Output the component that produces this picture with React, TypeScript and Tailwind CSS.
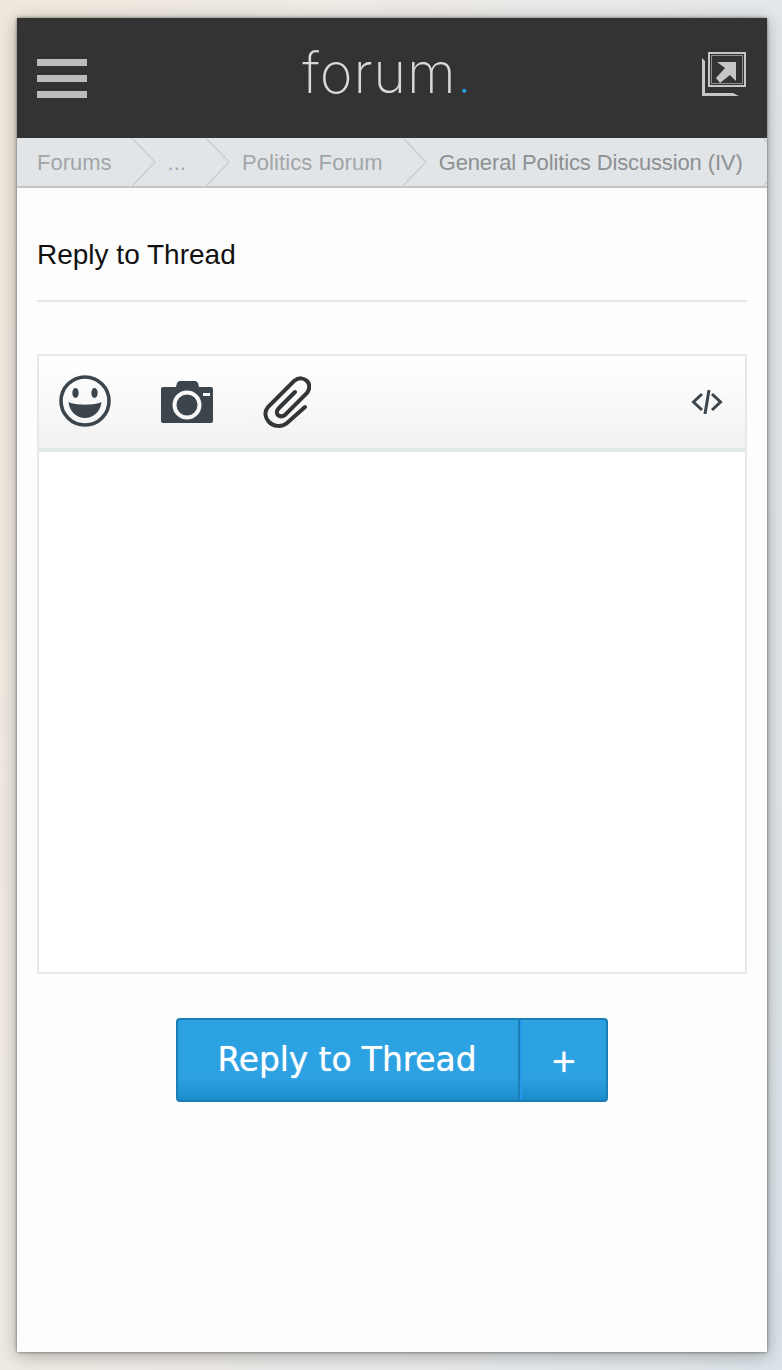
import { Fragment } from 'react';

const crumbs = [
  { label: 'Forums', cls: 'text-[#a3a5a7]' },
  { label: '...', cls: 'text-[#a3a5a7]' },
  { label: 'Politics Forum', cls: 'text-[#a3a5a7] tracking-[0.1px]' },
  { label: 'General Politics Discussion (IV)', cls: 'text-[#8e9092] tracking-[-0.13px]' },
];

function Chevron() {
  return (
    <svg width="24" height="48" viewBox="0 0 24 48" className="shrink-0 mr-[12px]">
      <path d="M0.5 0.5 L23 24 L0.5 47.5" fill="none" stroke="#c8cccd" strokeWidth="1.2" />
    </svg>
  );
}

function PopoutIcon() {
  return (
    <svg width="44" height="44" viewBox="0 0 44 44">
      <path d="M0 6 L3 9 V41 H31 L37 44 H0 Z" fill="#c6c6c6" />
      <rect x="7" y="1" width="36" height="33" fill="none" stroke="#c6c6c6" strokeWidth="2" />
      <rect x="9.5" y="3.5" width="31" height="28" fill="none" stroke="#8f8f8f" strokeWidth="1" />
      <path d="M15 10 H34 V29 L28 23 L18 31 L14 26 L23 16 Z" fill="#c6c6c6" />
    </svg>
  );
}

function SmileIcon() {
  return (
    <svg width="52" height="52" viewBox="0 0 52 52">
      <circle cx="26" cy="26" r="24" fill="none" stroke="#3c454c" strokeWidth="3.6" />
      <ellipse cx="16.5" cy="18" rx="3.2" ry="5" fill="#3c454c" />
      <ellipse cx="35.5" cy="18" rx="3.2" ry="5" fill="#3c454c" />
      <path d="M9.5 27 C15 30.5 37 30.5 42.5 27 C41.5 37 34 43 26 43 C18 43 10.5 37 9.5 27 Z" fill="#3c454c" />
    </svg>
  );
}

function CameraIcon() {
  return (
    <svg width="52" height="43" viewBox="0 0 52 43">
      <path
        fillRule="evenodd"
        fill="#3c454c"
        d="M2 7 H15 L16 3 Q17 1 19 1 H34 Q36 1 37 3 L38 7 H50 Q52 7 52 9 V41 Q52 43 50 43 H2 Q0 43 0 41 V9 Q0 7 2 7 Z M26 10.5 A14.5 14.5 0 1 0 26 39.5 A14.5 14.5 0 1 0 26 10.5 Z M26 14.5 A10.5 10.5 0 1 1 26 35.5 A10.5 10.5 0 1 1 26 14.5 Z M42 13 V16 H49 V13 Z"
      />
    </svg>
  );
}

function ClipIcon() {
  return (
    <svg width="48" height="52" viewBox="0 0 48 52">
      <path
        d="M42 31 L24 47 C18 52 10 50 6 46 C2 42 1 36 5 31 L31 5 C36 1 41 2 44 5 C47 8 47 13 44 17 L22 39 C19 41 17 41 15 39 C13 37 14 34 16 32 L32 16"
        fill="none"
        stroke="#333638"
        strokeWidth="4"
        strokeLinecap="round"
      />
    </svg>
  );
}

function CodeIcon() {
  return (
    <svg width="32" height="24" viewBox="0 0 32 24">
      <path d="M11 4 L2.5 12 L11 20 M21 4 L29.5 12 L21 20" fill="none" stroke="#3c454c" strokeWidth="3" />
      <path d="M18 0 L14 24" fill="none" stroke="#3c454c" strokeWidth="3" />
    </svg>
  );
}

export default function App() {
  return (
    <div className="h-[1370px] w-[782px] overflow-hidden pt-[18px] pl-[17px] bg-[linear-gradient(100deg,#efe8dd_0%,#eeeae5_35%,#e6e8ea_70%,#dbe3e8_100%)] font-['Liberation_Sans',sans-serif]">
      <div className="w-[750px] h-[1334px] bg-[#fdfdfd] shadow-[0_0_3px_rgba(0,0,0,0.5),0_3px_16px_rgba(0,0,0,0.3)] flex flex-col">
        <header className="h-[120px] bg-[#333333] flex items-center justify-between pl-[20px] pr-[21px] shrink-0">
          <div className="flex flex-col gap-[9px] w-[50px]">
            <div className="h-[7px] bg-[#bdbdbd]" />
            <div className="h-[7px] bg-[#bdbdbd]" />
            <div className="h-[7px] bg-[#bdbdbd]" />
          </div>
          <div className="font-['Inter',sans-serif] font-extralight text-[#d8d8d8] text-[56px] leading-none tracking-[0.8px] -mt-[11px] -ml-[14px]">
            forum<span className="text-[#2b9de0]">.</span>
          </div>
          <div className="-mt-[8px]">
            <PopoutIcon />
          </div>
        </header>

        <nav className="h-[50px] bg-[#e1e5e7] border-b-2 border-[#c2c4c5] flex items-center pl-[20px] overflow-hidden shrink-0">
          {crumbs.map((c) => (
            <Fragment key={c.label}>
              <span className={`text-[22px] whitespace-nowrap mr-[20px] ${c.cls}`}>{c.label}</span>
              <Chevron />
            </Fragment>
          ))}
        </nav>

        <div className="px-[20px] flex flex-col">
          <h1 className="h-[114px] pt-[22px] flex items-center border-b-2 border-[#e5e5e5] text-[28px] text-[#111111]">
            Reply to Thread
          </h1>

          <div className="mt-[52px] h-[620px] border-2 border-[#e3e8ea] flex flex-col">
            <div className="h-[96px] border-b-4 border-[#e3e8ea] bg-[linear-gradient(#ffffff,#f2f2f2)] flex items-center pl-[20px] pr-[22px] shrink-0">
              <div className="-mt-[2px]"><SmileIcon /></div>
              <div className="ml-[50px] -mt-[2px]"><CameraIcon /></div>
              <div className="ml-[50px]"><ClipIcon /></div>
              <div className="ml-auto"><CodeIcon /></div>
            </div>
            <div className="flex-1 bg-white" />
          </div>

          <div className="mt-[44px] flex justify-center">
            <div className="flex h-[84px] w-[432px] rounded-[4px] border-2 border-[#1a7fb8] bg-[linear-gradient(#2da2e3_0%,#2da2e3_72%,#1c8bcb_100%)] text-white font-['DejaVu_Sans',sans-serif]">
              <button className="w-[342px] border-r-2 border-r-[#1a7fb8] pr-[2px] text-[33px] tracking-[-0.13px] [text-shadow:0_0_1px_rgba(255,255,255,0.7)]">
                Reply to Thread
              </button>
              <button className="flex-1 border-l-2 border-l-[#2699ee] text-[32px] pt-[2px] [text-shadow:0_0_1px_rgba(255,255,255,0.7)]">+</button>
            </div>
          </div>
        </div>
      </div>
    </div>
  );
}
